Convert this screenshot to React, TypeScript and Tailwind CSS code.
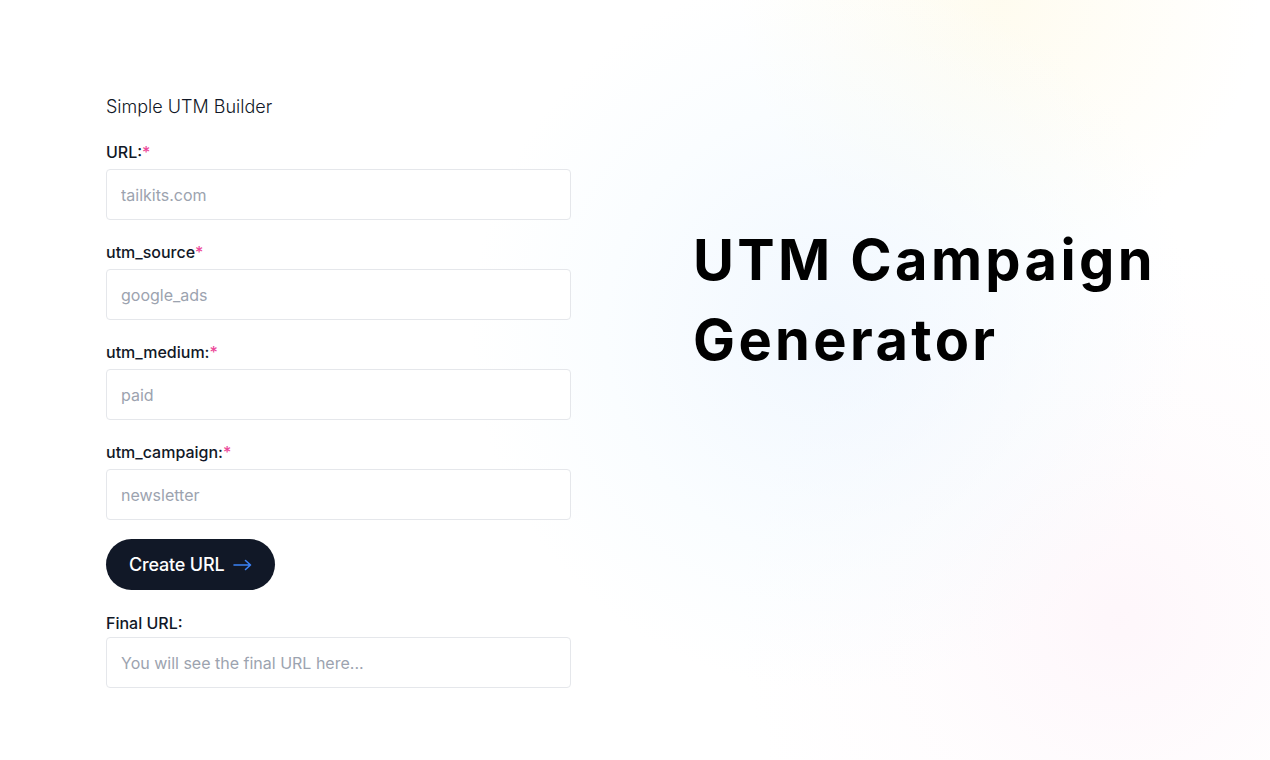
import React from "react";

const Field = ({ label, placeholder, required = true }: { label: string; placeholder: string; required?: boolean }) => (
  <div className="mb-[20px]">
    <label className="block h-[24px] mb-[5px] text-[16px] leading-[24px] font-medium text-[#111827]">
      {label}
      {required && <span className="text-[#ec4899]">*</span>}
    </label>
    <input
      className="block w-full h-[51px] rounded-[4px] border border-[#e5e7eb] bg-white px-[14px] text-[16px] text-[#111827] placeholder:text-[#9ca3af] outline-none"
      placeholder={placeholder}
    />
  </div>
);

export default function App() {
  return (
    <div
      className="w-full h-[760px] overflow-hidden grid grid-cols-2 bg-white bg-[radial-gradient(circle_at_830px_330px,rgba(224,238,254,0.45)_0px,rgba(240,249,255,0.35)_220px,rgba(255,255,255,0)_360px),radial-gradient(circle_at_1000px_0px,rgba(254,243,199,0.28)_0px,rgba(255,255,255,0)_260px),radial-gradient(circle_at_1120px_620px,rgba(252,231,243,0.35)_0px,rgba(253,242,248,0.2)_200px,rgba(255,255,255,0)_380px)]"
      style={{ fontFamily: "Inter, 'Noto Sans', sans-serif" }}
    >
      <div className="pl-[106px] pt-[93px]">
        <div className="w-[465px]">
          <h2 className="text-[18px] leading-[28px] font-light text-[#111827] mb-[19px]">Simple UTM Builder</h2>
          <Field label="URL:" placeholder="tailkits.com" />
          <Field label="utm_source" placeholder="google_ads" />
          <Field label="utm_medium:" placeholder="paid" />
          <Field label="utm_campaign:" placeholder="newsletter" />
          <button className="mt-[-1px] h-[51px] pl-[23px] pr-[23px] rounded-full bg-[#111827] text-white text-[18px] font-medium flex items-center gap-[9px] tracking-[-0.01em]">
            Create URL
            <svg width="19" height="12" viewBox="0 0 19 12" fill="none" stroke="#3b82f6" strokeWidth="1.6" strokeLinecap="round" strokeLinejoin="round">
              <path d="M1 6h16.5M12.5 1.5l5 4.5-5 4.5" />
            </svg>
          </button>
          <label className="block mt-[21px] h-[24px] mb-[2px] text-[16px] leading-[24px] font-medium text-[#111827]">Final URL:</label>
          <input
            readOnly
            className="block w-full h-[51px] rounded-[4px] border border-[#e5e7eb] bg-white px-[14px] text-[16px] placeholder:text-[#9ca3af] outline-none"
            placeholder="You will see the final URL here..."
          />
        </div>
      </div>
      <div className="flex items-start pl-[58px] pt-[220px]">
        <h1 className="text-[56px] leading-[80px] font-bold text-black tracking-[0.06em]">
          UTM Campaign
          <br />
          Generator
        </h1>
      </div>
    </div>
  );
}
